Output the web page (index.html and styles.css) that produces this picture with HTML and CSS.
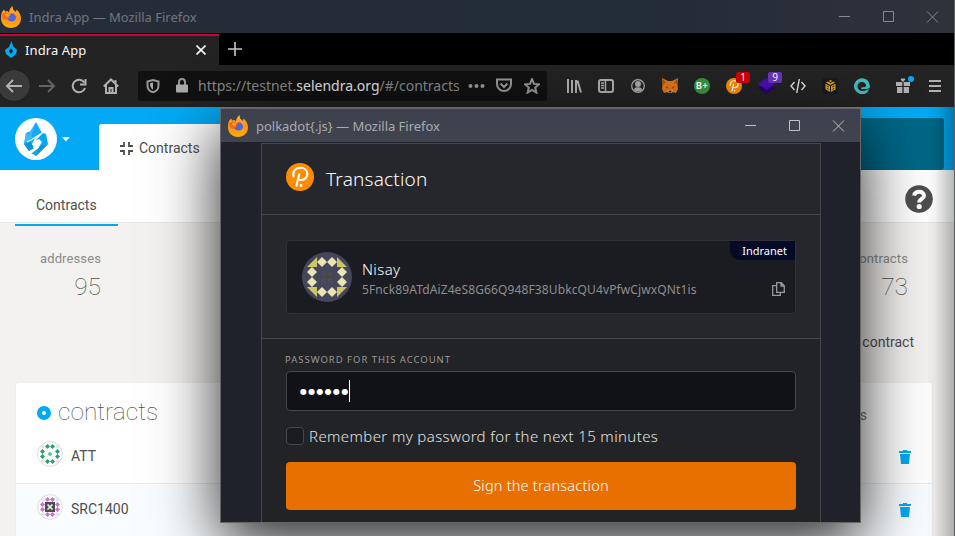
FILE: index.html
```html
<!DOCTYPE html>
<html lang="en">
<head>
<meta charset="utf-8">
<title>Indra App</title>
<link rel="stylesheet" href="styles.css">
</head>
<body>
<svg class="defs" aria-hidden="true">
  <defs>
    <linearGradient id="fox" x1="0" y1="0" x2="0" y2="1"><stop offset="0" stop-color="#ffb52c"/><stop offset=".5" stop-color="#ff9118"/><stop offset="1" stop-color="#ffad0a"/></linearGradient>
    <symbol id="firefox" viewBox="0 0 20 22">
      <path fill="url(#fox)" d="M1 6l2-2.500 1 2L6.500 5 8 6.500c.2-3 1.700-5 3.500-6.500l.6 3.500L15 6l.5-2.500C18.500 6 20 9 20 12.500 20 18 15.500 22 10 22S0 18 0 12.500c0-2.500.2-4.500 1-6.500z"/>
      <path fill="#f56a20" d="M1 8l4-2 4 2 3-1 2 2-4 2-3 3-5-1z"/>
      <path fill="#4866e6" d="M6 10l3-1 1.500-1.500c2.500 0 4.500 2 4.500 4 0 2.700-2 4-4.500 4-2.200 0-3.500-1.200-4-2.700l3-1z"/>
      <path fill="#ff9a18" d="M4 8c2-1 4 0 5 1.500L7 11c-2 0-3-1-3-3z"/>
    </symbol>
    <symbol id="polka" viewBox="0 0 28 28">
      <circle cx="14" cy="14" r="14" fill="#ff8c00"/>
      <path d="M7.500 13.500c-1.200-4.500 2-8.700 6.800-8.700 4 0 7 2.500 7 6.200s-3 6-6.500 6h-.8M13.200 11.300l-2.800 11.500" fill="none" stroke="#fff" stroke-width="2.100" stroke-linecap="round"/>
      <path d="M14.500 17l-2-1" stroke="#fff" stroke-width="1.500"/>
      <circle cx="15" cy="22.500" r="1.400" fill="#fff"/>
    </symbol>
    <symbol id="trash" viewBox="0 0 12 14"><path fill="#03a9f4" d="M4 0h4v1h4v2H0V1h4zM1 4h10l-1 10H2z"/></symbol>
    <symbol id="dia" viewBox="0 0 10 10"><path d="M5 0l5 5-5 5-5-5z"/></symbol>
  </defs>
</svg>

<div class="browser">
  <div class="titlebar">
    <svg class="fox"><use href="#firefox"/></svg>
    <span class="title">Indra App — Mozilla Firefox</span>
    <svg class="controls" width="102" height="14" viewBox="0 0 102 14"><path d="M1 6.500h11M45.500 1.500h10v10h-10zM89 1.500l11 11M100 1.500l-11 11"/></svg>
  </div>
  <div class="tabs">
    <div class="tab">
      <svg width="12" height="17" viewBox="0 0 12 17"><path fill="#03a9f4" fill-rule="evenodd" d="M6.500 0L8 5l4 4-1 4-5 4-5-4-1-4 4-3zM6 7l-2 3 2 3 2-3z"/></svg>
      <span>Indra App</span>
      <svg class="close" width="10" height="10" viewBox="0 0 10 10"><path d="M.5.5l9 9M9.500.5l-9 9"/></svg>
    </div>
    <svg class="plus" width="14" height="14" viewBox="0 0 14 14"><path d="M7 0v14M0 7h14"/></svg>
  </div>
  <div class="toolbar">
    <div class="back"><svg width="18" height="16" viewBox="0 0 18 16"><path d="M17 8H2M8 2L2 8l6 6"/></svg></div>
    <div class="cell dim"><svg width="18" height="16" viewBox="0 0 18 16"><path d="M1 8h15M10 2l6 6-6 6"/></svg></div>
    <div class="cell"><svg width="16" height="16" viewBox="0 0 16 16"><path d="M13.300 4.500A6.300 6.300 0 1 0 14 10M14.500 1v5.500H9"/></svg></div>
    <div class="cell"><svg width="16" height="16" viewBox="0 0 16 16"><path d="M.8 8.500L8 1.500l7.200 7M3 7v8h10V7M6.500 15v-5h3v5M12.500 2v4"/></svg></div>
    <div class="urlbar">
      <svg class="shield" width="14" height="14" viewBox="0 0 14 14"><path d="M7 1l5.500 1.500v4C12.500 10 10 12.500 7 13.300 4 12.500 1.500 10 1.500 6.500v-4z"/><path class="solid" d="M7 3.500L4 4.300c-.2 3 .8 5 3 6.500z"/></svg>
      <svg class="lock" width="12" height="15" viewBox="0 0 12 15"><path d="M3 7V4a3 3 0 0 1 6 0v3"/><rect class="solid" y="6.500" width="12" height="8" rx="1"/></svg>
      <span class="url">https://testnet.<b>selendra.org</b>/#/contracts</span>
      <svg class="dots" width="17" height="4" viewBox="0 0 17 4"><circle cx="2.500" cy="2" r="2"/><circle cx="8.500" cy="2" r="2"/><circle cx="14.500" cy="2" r="2"/></svg>
      <svg class="pocket" width="16" height="15" viewBox="0 0 16 15"><path d="M1 1.500h14V6a7 7 0 0 1-14 0zM4.500 5.500L8 9l3.500-3.500"/></svg>
      <svg class="star" width="16" height="16" viewBox="0 0 16 16"><path d="M8 1.200l2 4.700 5 .4-3.800 3.300 1.200 5L8 12l-4.400 2.600 1.200-5L1 6.300l5-.4z"/></svg>
    </div>
    <div class="cell first"><svg width="16" height="14" viewBox="0 0 16 14"><path d="M2 0v14M6 1v13M10 1v13M11.500 1.500l3.500 12"/></svg></div>
    <div class="cell"><svg width="16" height="14" viewBox="0 0 16 14"><rect x="1" y="1" width="14" height="12" rx="2"/><path stroke-width="1.500" d="M7.500 1v12M3 4h3M3 6.500h3M3 9h3"/></svg></div>
    <div class="cell"><svg width="14" height="14" viewBox="0 0 14 14"><circle stroke-width="1.200" cx="7" cy="7" r="6.300"/><circle class="solid" cx="7" cy="5" r="3"/><path class="solid" d="M3 11c0-2 2-3 4-2.500 2-.5 4 .5 4 2.500-2 2-6 2-8 0z"/></svg></div>
    <div class="cell"><svg class="plain" width="16" height="16" viewBox="0 0 16 16"><path fill="#e2761b" d="M0 0l6 3h4l6-3-.5 7 .5 4-2 4-4-1H6l-4 1-2-4 .5-4z"/><path fill="#a5541a" d="M0 0l4 5-3 1zM16 0l-4 5 3 1z"/><path fill="#763d16" d="M4 8l2.500 2-2 .5zM12 8l-2.500 2 2 .5z"/><path fill="#c9bdb3" d="M5 12l2 1h2l2-1-1 3H6z"/><path fill="#222" d="M6.500 13h3v1.500h-3z"/></svg></div>
    <div class="cell"><span class="bplus">B+</span></div>
    <div class="cell"><svg class="plain" width="16" height="16"><use href="#polka"/></svg><span class="badge red">1</span></div>
    <div class="cell"><svg class="plain" width="17" height="16" viewBox="0 0 17 16"><path fill="#24006f" d="M0 10l8.500-5 8.500 5-8.500 6z"/><path fill="#4b0db0" d="M0 6l8.500-6L17 6l-8.500 6z"/></svg><span class="badge purple">9</span></div>
    <div class="cell"><svg class="code" width="16" height="14" viewBox="0 0 16 14"><path stroke-width="1.400" d="M4.500 3L1 7l3.500 4M11.500 3L15 7l-3.500 4M9.300 0L6.700 14"/></svg></div>
    <div class="cell"><span class="dark"><svg class="plain" width="11" height="12" viewBox="0 0 12 13"><path fill="#dba514" d="M6 0l2 1-2 1-2-1zM3 1.700l3 1.500 3-1.500 2 1-5 2.600-5-2.600zM.5 4l5 2.500V13L.5 10zM11.500 4l-5 2.500V13l5-3z"/><path stroke="#1a1a22" d="M2 6.500l2 1M2 9l2 1.200M10 6.500l-2 1M10 9l-2 1.200"/></svg></span></div>
    <div class="cell"><svg class="plain" width="16" height="16" viewBox="0 0 16 16"><path fill="#43bdbd" d="M13 14.500A8 8 0 1 1 16 8c0 2-1.500 3-4 3H8c-1 0-1.500-1-.5-1.500 1.500-.3 4 0 4.500-1.500.3-2.500-2-4-4-4C5 4 3.500 6 3.500 8.300c0 3 3 5.200 6 4.700 2-.2 4-1 5.500-2.500-.3 1.500-1 3-2 4z"/></svg></div>
    <div class="cell gift"><svg class="plain" width="14" height="15" viewBox="0 0 14 15"><path fill="#b1b1b3" d="M0 4h6.300v4H0zM7.700 4H14v4H7.700zM1 9h5.300v6H1zM7.700 9H13v6H7.700zM7 4L4.500 1.500 6 0l1 1 1-1 1.500 1.500z"/></svg><i class="notice"></i></div>
    <div class="cell"><svg width="12" height="12" viewBox="0 0 12 12"><path d="M0 1h12M0 6h12M0 11h12"/></svg></div>
  </div>

  <div class="page">
    <header class="apphead">
      <svg class="logo" width="42" height="42" viewBox="0 0 42 42"><circle cx="21" cy="21" r="21" fill="#fff"/><path fill="#14aaf2" d="M21 4l6 11-7 5-3 6 2 4-5 3-5-7 2-11 5-2z"/><path fill="#03a9f4" d="M28 15l3 1 2 10-12 12-5-3 8-6 3-5-3-3-4 2z"/><path fill="#3fbcf7" d="M21 4l-5 14-2-3zM11 15l7 4-9 7z"/><path fill="#0795dc" d="M9 26l6-2 4 6-5 3zM24 29l9-3-12 12z"/><path d="M12 24l4-2 11-7M16 35l8-6" stroke="#fff" stroke-width="1.200" fill="none"/><path fill="#fff" d="M21 22l4 2-3 5-4 1 1-4z"/></svg>
      <svg class="caret" width="8" height="5" viewBox="0 0 8 5"><path fill="#e4f5fd" d="M0 0h8L4 4.600z"/></svg>
      <div class="apptab"><svg width="13" height="13" viewBox="0 0 13 13"><path d="M4 0v4H0M9 0v4h4M4 13V9H0M9 13V9h4"/></svg>Contracts</div>
      <div class="endpoint"></div>
    </header>
    <nav class="subnav">
      <a class="active">Contracts</a>
      <svg class="help" width="28" height="28" viewBox="0 0 28 28"><circle cx="14" cy="14" r="13.800" fill="#4e4e4e"/><path d="M9 10.700C10 5.500 19 5.500 19 10.700c0 3.300-4.800 3-4.800 6.800" fill="none" stroke="#fff" stroke-width="4"/><circle cx="14.200" cy="21.500" r="2.600" fill="#fff"/></svg>
    </nav>
    <main>
      <div class="summary">
        <div class="stat"><label>addresses</label><strong>95</strong></div>
        <div class="stat"><label>contracts</label><strong>73</strong></div>
      </div>
      <div class="actions">Add an existing contract</div>
      <section class="table">
        <div class="thead"><i class="ring"></i><h1>contracts</h1><span>messages</span></div>
        <div class="row">
          <svg class="ident" viewBox="0 0 26 26"><circle cx="13" cy="13" r="12.400"/><g fill="#e4e4e4"><circle cx="5.700" cy="5.700" r="2"/><circle cx="20.300" cy="5.700" r="2"/><circle cx="5.700" cy="20.300" r="2"/><circle cx="20.300" cy="20.300" r="2"/></g><g fill="#2e9e6b"><use href="#dia" x="8" y="3" width="5" height="5"/><use href="#dia" x="13" y="3" width="5" height="5"/><use href="#dia" x="8" y="18" width="5" height="5"/><use href="#dia" x="13" y="18" width="5" height="5"/><use href="#dia" x="3" y="8" width="5" height="5"/><use href="#dia" x="3" y="13" width="5" height="5"/><use href="#dia" x="18" y="8" width="5" height="5"/><use href="#dia" x="18" y="13" width="5" height="5"/></g><g fill="#57cb94"><use href="#dia" x="10.500" y="10.500" width="5" height="5"/></g></svg>
          <span>ATT</span><svg class="trash"><use href="#trash"/></svg>
        </div>
        <div class="row tinted">
          <svg class="ident" viewBox="0 0 26 26"><circle cx="13" cy="13" r="12.400"/><g fill="#e4e4e4"><circle cx="5.700" cy="5.700" r="2"/><circle cx="20.300" cy="5.700" r="2"/><circle cx="5.700" cy="20.300" r="2"/><circle cx="20.300" cy="20.300" r="2"/></g><g fill="#ca70d2"><use href="#dia" x="8" y="3" width="5" height="5"/><use href="#dia" x="13" y="3" width="5" height="5"/><use href="#dia" x="8" y="18" width="5" height="5"/><use href="#dia" x="13" y="18" width="5" height="5"/><use href="#dia" x="3" y="8" width="5" height="5"/><use href="#dia" x="3" y="13" width="5" height="5"/><use href="#dia" x="18" y="8" width="5" height="5"/><use href="#dia" x="18" y="13" width="5" height="5"/></g><path fill="#4d4d4d" d="M8 8h10v10H8z"/><path d="M10.500 10.500l5 5M15.500 10.500l-5 5" stroke="#eee" stroke-width="1.700"/></svg>
          <span>SRC1400</span><svg class="trash"><use href="#trash"/></svg>
        </div>
      </section>
    </main>
  </div>
</div>

<div class="popup">
  <div class="titlebar">
    <svg class="fox"><use href="#firefox"/></svg>
    <span class="title">polkadot{.js} — Mozilla Firefox</span>
    <svg class="controls" width="102" height="14" viewBox="0 0 102 14"><path d="M1 6.500h11M45.500 1.500h10v10h-10zM89 1.500l11 11M100 1.500l-11 11"/></svg>
  </div>
  <div class="ext">
    <div class="exthead"><svg width="28" height="28"><use href="#polka"/></svg><h2>Transaction</h2></div>
    <div class="accountwrap">
      <div class="account">
        <svg width="50" height="50" viewBox="0 0 50 50"><circle cx="25" cy="25" r="25" fill="#45455b"/><path fill="#cdc663" d="M15 5v10H5zM35 5v10h10zM15 45V35H5zM35 45V35h10z"/><g fill="#e8e5b2"><use href="#dia" x="15" y="5" width="10" height="10"/><use href="#dia" x="25" y="5" width="10" height="10"/><use href="#dia" x="15" y="35" width="10" height="10"/><use href="#dia" x="25" y="35" width="10" height="10"/><use href="#dia" x="5" y="15" width="10" height="10"/><use href="#dia" x="5" y="25" width="10" height="10"/><use href="#dia" x="35" y="15" width="10" height="10"/><use href="#dia" x="35" y="25" width="10" height="10"/></g><g fill="#4c4c4c"><circle cx="22" cy="22" r="2.500"/><circle cx="28" cy="22" r="2.500"/><circle cx="22" cy="28" r="2.500"/><circle cx="28" cy="28" r="2.500"/></g></svg>
        <div class="who"><div class="name">Nisay</div><div class="addr">5Fnck89ATdAiZ4eS8G66Q948F38UbkcQU4vPfwCjwxQNt1is</div></div>
        <svg class="copy" width="13" height="14" viewBox="0 0 13 14"><path d="M4.700.7h4.600l3 3v6.600H4.700zM9 1v3h3M4.500 3.700H.7v9.600h7.600v-3"/></svg>
        <span class="chain">Indranet</span>
      </div>
    </div>
    <div class="sign">
      <label class="lbl">PASSWORD FOR THIS ACCOUNT</label>
      <div class="input"><span>●●●●●●</span><i></i></div>
      <div class="remember"><i></i><span>Remember my password for the next 15 minutes</span></div>
      <button><span>Sign the transaction</span></button>
    </div>
  </div>
</div>
</body>
</html>
```
FILE: styles.css
```css
* { box-sizing: border-box; }
body { margin: 0; width: 955px; height: 536px; overflow: hidden; position: relative; background: #5c5f60; font-family: Roboto, sans-serif; }
svg { display: block; flex: none; }
.defs { position: absolute; width: 0; height: 0; }
h1, h2 { margin: 0; font-weight: 400; }

.browser { width: 954px; height: 536px; overflow: hidden; display: flex; flex-direction: column; }
.titlebar { display: flex; align-items: center; height: 33px; flex: none; padding-left: 1px; font: 13px "Noto Sans", sans-serif; }
.browser > .titlebar { background: linear-gradient(90deg, #262d39, #222b38 65%, #30323b); color: #71757d; }
.browser .title { margin-left: 8px; letter-spacing: -.02px; }
.fox { width: 20px; height: 22px; }
.controls { margin-left: auto; fill: none; stroke: #858891; stroke-width: 1; }
.browser .controls { margin-right: 14px; }

.tabs { height: 32px; flex: none; background: #000; display: flex; align-items: center; }
.tab { width: 219px; height: 32px; margin-top: 1px; background: #232323; border-top: 2px solid #d00030; display: flex; align-items: center; padding: 0 13px 2px 5px; color: #f9f9fa; font: 13px "Noto Sans", sans-serif; }
.tab span { margin-left: 8px; letter-spacing: .1px; }
.close { margin-left: auto; stroke: #f9f9fa; stroke-width: 1.6; }
.plus { margin-left: 9px; stroke: #c8c8c8; stroke-width: 1.6; }

.toolbar { height: 42px; flex: none; background: #232323; display: flex; align-items: center; }
.toolbar svg:not(.plain) { fill: none; stroke: #b1b1b3; stroke-width: 2; }
.toolbar svg .solid { fill: #aaaaac; stroke: none; }
.toolbar svg.code:not(.plain) { stroke: #e4e4e4; }
.back { width: 32px; height: 31px; margin-left: -2px; margin-right: 1px; border-radius: 50%; background: #3a3a3b; display: grid; place-items: center; margin-top: -1px; box-shadow: 0 0 1px #000; }
.cell { width: 32px; height: 32px; flex: none; display: grid; place-items: center; position: relative; margin-top: -1px; }
.cell.dim { opacity: .45; }
.urlbar { width: 409px; height: 30px; margin: 0 0 0 11px; border-radius: 3px; background: #111; display: flex; align-items: center; color: #88888a; }
.toolbar .urlbar svg { stroke: #98989a; }
.urlbar > svg { margin-top: -1px; }
.shield { margin-left: 8px; }
.lock { margin-left: 16px; }
.url { margin-left: 10px; margin-top: -2px; width: 262px; white-space: nowrap; font: 14px "Noto Sans", sans-serif; letter-spacing: 0; }
.url b { font-weight: 400; color: #e0e0e2; }
.dots { margin-left: 8px; }
.toolbar .urlbar .dots { fill: #98989a; stroke: none; }
.pocket { margin-left: 11px; }
.star { margin-left: 12px; }
.first { margin-left: 11px; }
.bplus { width: 16px; height: 16px; border-radius: 50%; background: #39963d; color: #fff; font: 700 9px/16px Inter, sans-serif; text-align: center; }
.dark { width: 16px; height: 16px; border-radius: 3px; background: #1a1a22; display: grid; place-items: center; }
.badge { position: absolute; left: 18px; top: 2px; width: 14px; height: 11px; border-radius: 2px; color: #fff; font: 10px/11px "Noto Sans", sans-serif; text-align: center; }
.red { background: #d00000; }
.purple { background: #6a36b8; }
.gift { margin-left: 9px; }
.notice { position: absolute; left: 21px; top: 6px; width: 6px; height: 6px; border-radius: 50%; background: #00a8ff; }

.page { flex: 1; background: #f3f2f0; position: relative; color: #4e4e4e; overflow: hidden; }
.page::after { content: ""; position: absolute; inset: 0 0 0 auto; width: 28px; background: linear-gradient(90deg, transparent, rgba(0,0,0,.04) 30%, rgba(0,0,0,.28)); }
.apphead { height: 63px; background: #03a9f4; display: flex; align-items: center; padding-left: 15px; }
.caret { margin-left: 5px; margin-top: 1px; }
.apptab { align-self: flex-end; width: 125px; height: 46px; margin-left: 29px; border-radius: 3px 3px 0 0; background: #fff; display: flex; align-items: center; padding: 2px 0 0 21px; font-size: 14px; }
.apptab svg { margin-right: 6px; fill: none; stroke: #4e4e4e; stroke-width: 1.8; }
.endpoint { margin-left: auto; margin-right: 10px; width: 300px; height: 52px; align-self: flex-end; background: #006787; border-radius: 3px; }
.subnav { height: 53px; background: #fff; border-bottom: 1px solid #e9e8e6; display: flex; align-items: center; justify-content: space-between; padding: 0 21px 0 15px; }
.active { width: 103px; height: 56px; margin-top: 3px; border-bottom: 2px solid #03a9f4; padding: 26px 0 0 21px; font-size: 14px; line-height: 18px; position: relative; }
.help { margin-top: 5px; }
.summary { height: 103px; display: flex; justify-content: space-between; padding: 28px 46px 0 40px; }
.stat { display: flex; flex-direction: column; align-items: flex-end; color: #8b8b8a; }
.stat label { font-size: 13px; line-height: 16px; letter-spacing: .12px; }
.stat strong { font-weight: 100; font-size: 24.5px; line-height: 28px; margin-top: 6px; color: #4e4e4e; }
.actions { height: 57px; text-align: right; padding: 7px 40px 0 0; font-size: 14px; line-height: 18px; }
.table { margin: 0 22px 0 16px; height: 160px; background: #fff; box-shadow: 0 0 0 1px #efeeec; border-radius: 3px; }
.thead { height: 48px; display: flex; align-items: center; padding: 10px 65px 0 21px; }
.ring { width: 14px; height: 14px; border: 5px solid #03a9f4; border-radius: 50%; margin-top: 2px; }
.thead h1 { margin-left: 7px; font-weight: 100; font-size: 24.5px; line-height: 30px; letter-spacing: 0; margin-top: -1px; color: #4e4e4e; }
.thead span { margin-left: auto; font-size: 14px; color: #777; margin-top: 6px; }
.row { height: 53px; display: flex; align-items: center; padding: 0 21px; font-size: 14px; border-bottom: 1px solid #ececec; }
.row span { margin: -2px 0 0 8px; }
.tinted { background: #fafdff; }
.ident { width: 26px; height: 26px; margin-top: -6px; fill: #fff; stroke: none; }
.ident > circle { stroke: #ddd; stroke-width: 1; }
.trash { width: 12px; height: 14px; margin-left: auto; }

.popup { position: absolute; left: 220px; top: 108px; width: 641px; height: 415px; border: 1px solid #666; background: #1f222b; box-shadow: 0 20px 60px rgba(0,0,0,.85); display: flex; flex-direction: column; color: #fff; font-family: "Noto Sans", sans-serif; }
.popup > .titlebar { background: linear-gradient(#3d414d, #40444e); color: #a9abb1; padding: 0 14px 0 7px; }
.popup .title { margin-left: 8px; letter-spacing: -.02px; }
.popup .controls { stroke: #c0c1c5; }
.ext { width: 560px; margin: 1px 0 0 40px; flex: 1; border: 1px solid #46474c; border-bottom: 0; background: #26272c; font-family: "Noto Sans", sans-serif; overflow: hidden; }
.exthead { height: 71px; border-bottom: 1px solid #46474c; display: flex; align-items: center; padding: 0 0 4px 24px; }
h2 { margin-left: 12px; margin-top: 4px; font-size: 19px; font-weight: 300; letter-spacing: .2px; }
.accountwrap { height: 124px; border-bottom: 1px solid #46474c; padding: 25px 24px 0; }
.account { height: 74px; border: 1px solid #303137; border-radius: 4px; background: #1b1c21; position: relative; display: flex; align-items: center; padding: 0 10px 0 15px; }
.who { margin-left: 10px; padding-top: 3px; width: 345px; white-space: nowrap; }
.name { font-size: 15px; line-height: 22px; font-weight: 300; letter-spacing: .4px; }
.addr { font-size: 12px; line-height: 20px; color: #8e8e8e; letter-spacing: .12px; }
.copy { margin: 24px 0 0 auto; fill: none; stroke: #999; stroke-width: 1.3; }
.chain { position: absolute; right: 0; top: 0; width: 65px; height: 19px; border-radius: 0 0 0 10px; background: #060a27; font-size: 11px; line-height: 20px; text-align: right; padding-right: 8px; letter-spacing: 0; }
.sign { height: 200px; background: #222327; padding: 13px 24px 0; }
.lbl { display: block; height: 19px; font-size: 9.5px; line-height: 16px; color: #999; letter-spacing: .98px; white-space: nowrap; margin-left: -1px; }
.input { height: 40px; border: 1px solid #46474c; border-radius: 4px; background: #111217; display: flex; align-items: center; padding-left: 12px; }
.input span { font: 8px/10px "DejaVu Sans", sans-serif; letter-spacing: 1.3px; padding-top: 1px; margin-left: 1px; }
.input i { width: 1px; height: 22px; background: #fff; margin-left: -1px; }
.remember { height: 51px; display: flex; align-items: center; color: #e4e4e4; font-size: 15px; }
.remember i { width: 18px; height: 18px; border: 1px solid #46474c; border-radius: 4px; background: #1b1c21; margin-top: -1px; }
.remember span { margin-left: 5px; margin-top: -2px; white-space: nowrap; font-weight: 300; letter-spacing: .38px; }
button { width: 100%; height: 48px; border: 0; border-radius: 4px; background: #e87000; color: #fff; font: 300 14.5px "Noto Sans", sans-serif; letter-spacing: .2px; padding: 0 0 2px; display: block; }
```
